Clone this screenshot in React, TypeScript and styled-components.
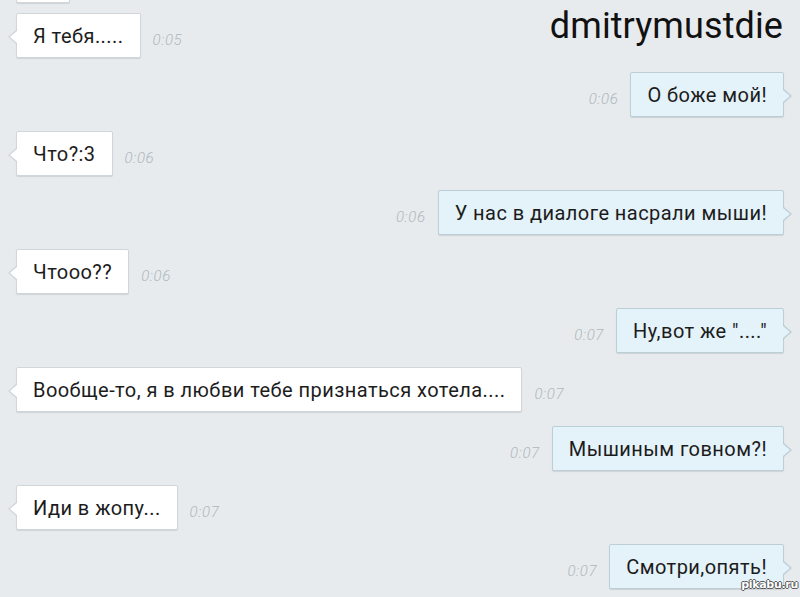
import React from "react";
import styled, { createGlobalStyle, css } from "styled-components";

const GlobalStyle = createGlobalStyle`
  html, body {
    margin: 0;
    padding: 0;
    background: #e7ebee;
    overflow: hidden;
  }
  #root {
    width: 800px;
    height: 597px;
  }
`;

const Screen = styled.div`
  position: relative;
  width: 800px;
  height: 597px;
  overflow: hidden;
  background: #e7ebee;
  font-family: Roboto, "Liberation Sans", sans-serif;
`;

const Title = styled.div`
  position: absolute;
  top: 8px;
  right: 17px;
  font-size: 36px;
  line-height: 36px;
  color: #111;
  letter-spacing: 0.1px;
`;

const Watermark = styled.div`
  position: absolute;
  right: 2px;
  bottom: 6px;
  font-family: "DejaVu Sans", sans-serif;
  font-size: 11px;
  font-weight: bold;
  color: #fff;
  letter-spacing: -0.3px;
  text-shadow: -1px 0 #555, 1px 0 #555, 0 -1px #555, 0 1px #555;
`;

const List = styled.div`
  display: flex;
  flex-direction: column;
  gap: 14px;
  margin-top: -42px;
  padding: 0 16px;
`;

const Row = styled.div<{ $out?: boolean; $cut?: boolean }>`
  display: flex;
  flex-direction: ${(p) => (p.$out ? "row-reverse" : "row")};
  justify-content: flex-start;
  align-items: flex-end;
  gap: 12px;
  ${(p) => p.$cut && css`margin-bottom: -4px;`}
`;

const Bubble = styled.div<{ $out?: boolean }>`
  position: relative;
  padding: 11px 16px 9px;
  font-size: 20px;
  line-height: 23px;
  letter-spacing: 0.45px;
  color: #1c1c1c;
  white-space: nowrap;
  border-radius: 2px;
  background: ${(p) => (p.$out ? "#e4f2f9" : "#ffffff")};
  border: 1px solid ${(p) => (p.$out ? "#bccfd9" : "#d0d7dc")};
  box-shadow: 0 1px 1px rgba(0, 0, 0, 0.1);

  &::before,
  &::after {
    content: "";
    position: absolute;
    border-style: solid;
    width: 0;
    height: 0;
  }
  &::before {
    top: 16px;
    ${(p) =>
      p.$out
        ? css`
            right: -9px;
            border-width: 7px 0 7px 8px;
            border-color: transparent transparent transparent #bccfd9;
          `
        : css`
            left: -9px;
            border-width: 7px 8px 7px 0;
            border-color: transparent #d0d7dc transparent transparent;
          `}
  }
  &::after {
    top: 17px;
    ${(p) =>
      p.$out
        ? css`
            right: -7px;
            border-width: 6px 0 6px 7px;
            border-color: transparent transparent transparent #e4f2f9;
          `
        : css`
            left: -7px;
            border-width: 6px 7px 6px 0;
            border-color: transparent #ffffff transparent transparent;
          `}
  }
`;

const StubBubble = styled(Bubble)`
  width: 20px;
  height: 23px;
`;

const Time = styled.span`
  font-size: 15px;
  line-height: 18px;
  font-style: italic;
  font-weight: 300;
  letter-spacing: 0.6px;
  color: #b0b7bc;
  margin-bottom: 9px;
`;

type Msg = { text: string; time: string; out?: boolean };

const messages: Msg[] = [
  { text: "Я тебя.....", time: "0:05" },
  { text: "О боже мой!", time: "0:06", out: true },
  { text: "Что?:3", time: "0:06" },
  { text: "У нас в диалоге насрали мыши!", time: "0:06", out: true },
  { text: "Чтооо??", time: "0:06" },
  { text: "Ну,вот же \"....\"", time: "0:07", out: true },
  { text: "Вообще-то, я в любви тебе признаться хотела....", time: "0:07" },
  { text: "Мышиным говном?!", time: "0:07", out: true },
  { text: "Иди в жопу...", time: "0:07" },
  { text: "Смотри,опять!", time: "0:07", out: true },
];

export default function App() {
  return (
    <Screen>
      <GlobalStyle />
      <List>
        <Row $cut>
          <StubBubble />
        </Row>
        {messages.map((m, i) => (
          <Row key={i} $out={m.out}>
            <Bubble $out={m.out}>{m.text}</Bubble>
            <Time>{m.time}</Time>
          </Row>
        ))}
      </List>
      <Title>dmitrymustdie</Title>
      <Watermark>pikabu.ru</Watermark>
    </Screen>
  );
}
